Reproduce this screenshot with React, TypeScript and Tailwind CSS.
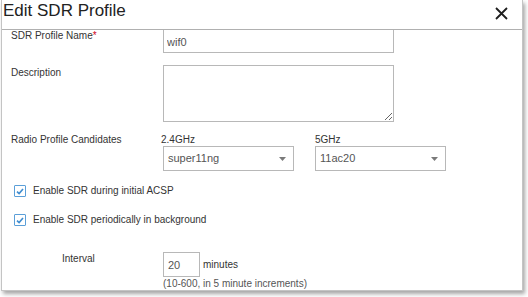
import { ReactNode } from 'react';

const font = { fontFamily: '"Liberation Sans", Arial, sans-serif' };

function Select({ value }: { value: string }) {
  return (
    <div className="flex h-[25px] w-[131px] items-center justify-between border border-[#b8b8b8] bg-white pl-[4px] pr-[7px] text-[11px] text-[#555]">
      <span>{value}</span>
      {/* small caret */}
      <svg width="7" height="4" viewBox="0 0 7 4">
        <path d="M0 0 L7 0 L3.5 4 Z" fill="#7a7a7a" />
      </svg>
    </div>
  );
}

function Check({ label }: { label: string }) {
  return (
    <div className="flex items-center gap-[7px] pl-[10px]">
      <span className="flex h-[12px] w-[12px] items-center justify-center rounded-[1px] border border-[#5b9fd8] bg-white">
        <svg width="8" height="7" viewBox="0 0 8 7">
          <path d="M1 3.6 L3.1 5.6 L7 1" fill="none" stroke="#3f8dd0" strokeWidth="1.6" />
        </svg>
      </span>
      <span className="leading-[12px]">{label}</span>
    </div>
  );
}

function Row({ label, children, className = '' }: { label: ReactNode; children: ReactNode; className?: string }) {
  return (
    <div className={`flex items-start ${className}`}>
      <div className="w-[152px] shrink-0 leading-[12px]">{label}</div>
      {children}
    </div>
  );
}

export default function App() {
  return (
    <div className="h-[297px] w-[528px] bg-white text-[10px] text-[#333]" style={font}>
      <div className="ml-[1px] flex h-[291px] w-[522px] flex-col border-x border-b border-[#c4c4c4] bg-white shadow-[2px_3px_4px_rgba(0,0,0,0.35)]">
        {/* Header */}
        <div className="flex h-[30px] shrink-0 items-start justify-between border-b border-[#b0b0b0] pt-[1px] pl-[1px]">
          <h1 className="text-[17px] leading-[20px] text-[#222]">Edit SDR Profile</h1>
          <svg className="mt-[6px] mr-[14px]" width="13" height="13" viewBox="0 0 13 13">
            <path d="M1 1 L12 12 M12 1 L1 12" stroke="#1e1e1e" strokeWidth="1.8" />
          </svg>
        </div>

        {/* Body, scrolled a little */}
        <div className="flex-1 overflow-hidden">
          <div className="-mt-[2px] pl-[9px]">
            <Row label={<div className="pt-[2px]">SDR Profile Name<span className="text-[#d0021b]">*</span></div>}>
              <input
                readOnly
                value="wif0"
                className="h-[25px] w-[231px] border border-[#b8b8b8] px-[3px] pt-[2px] text-[11px] text-[#555] outline-none"
              />
            </Row>

            <Row label={<div className="pt-[2px]">Description</div>} className="mt-[12px]">
              <textarea readOnly className="h-[57px] w-[231px] border border-[#b8b8b8] outline-none" />
            </Row>

            <div className="mt-[12px] flex items-start">
              <div className="w-[152px] shrink-0 leading-[12px]">Radio Profile Candidates</div>
              <div className="flex gap-[21px]">
                <div className="flex flex-col">
                  <span className="-ml-[2px] leading-[12px]">2.4GHz</span>
                  <Select value="super11ng" />
                </div>
                <div className="flex flex-col">
                  <span className="leading-[12px]">5GHz</span>
                  <Select value="11ac20" />
                </div>
              </div>
            </div>

            <div className="mt-[14px] -ml-[9px] pl-[2px]">
              <Check label="Enable SDR during initial ACSP" />
            </div>
            <div className="mt-[17px] -ml-[9px] pl-[2px]">
              <Check label="Enable SDR periodically in background" />
            </div>

            <div className="mt-[26px] flex items-start">
              <div className="w-[152px] shrink-0 pl-[51px] pt-[1px] leading-[12px]">Interval</div>
              <div className="flex flex-col">
                <div className="flex items-center gap-[3px]">
                  <input
                    readOnly
                    value="20"
                    className="h-[25px] w-[37px] border border-[#b8b8b8] px-[4px] pt-[1px] text-[11px] text-[#555] outline-none"
                  />
                  <span className="leading-[12px]">minutes</span>
                </div>
                <span className="mt-[1px] leading-[11px] text-[#555]">(10-600, in 5 minute increments)</span>
              </div>
            </div>
          </div>
        </div>
      </div>
    </div>
  );
}
